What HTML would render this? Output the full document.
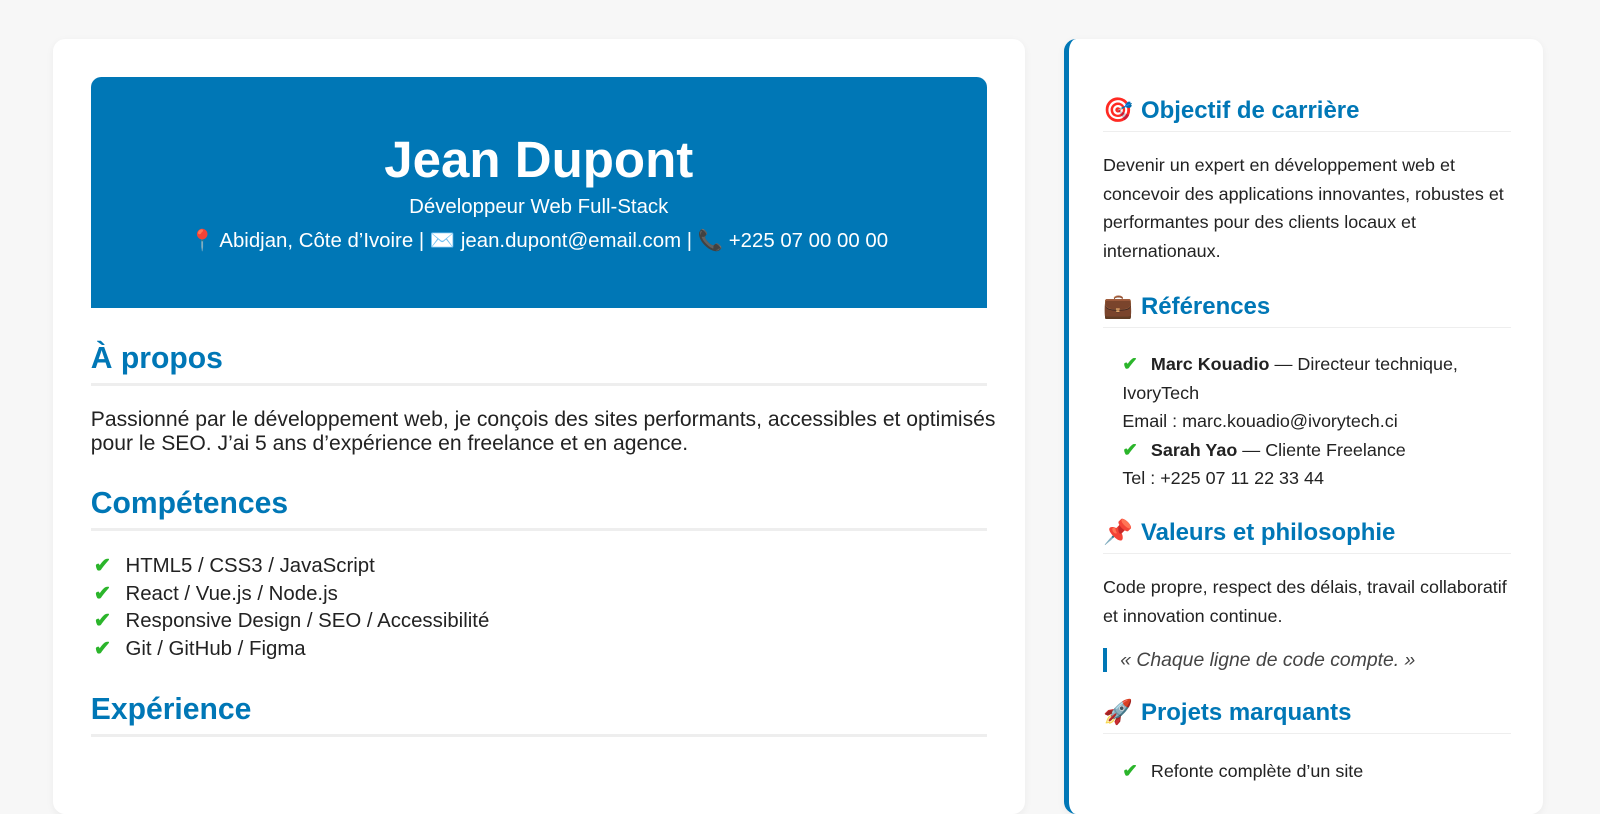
<!DOCTYPE html>
<html><head><meta charset="utf-8"><style>
*{box-sizing:border-box;margin:0;padding:0}
html{background:#f7f7f7}
body{background:#f7f7f7;font-family:"Liberation Sans",Arial,sans-serif;color:#333;width:1568px;height:749px;overflow:hidden;position:relative;zoom:1.0204}
.left{position:absolute;left:52px;top:38px;width:953px;height:760px;background:#fff;border-radius:12px;box-shadow:0 2px 8px rgba(0,0,0,.05)}
.hdr{position:absolute;left:37px;top:37px;width:878px;height:227px;background:#0077b6;border-radius:10px 10px 0 0;color:#fff;text-align:center}
.hdr h1{position:absolute;top:53px;width:100%;font-size:50px;font-weight:bold;line-height:56px}
.hdr .t{position:absolute;top:116px;width:100%;font-size:20px;line-height:24px}
.hdr .c{position:absolute;top:149px;width:100%;font-size:20px;line-height:24px}
.h2{position:absolute;left:37px;width:878px;font-size:29.5px;font-weight:bold;color:#0077b6;border-bottom:3px solid #eee;line-height:34px;padding-bottom:6px}
.p{position:absolute;left:37px;width:900px;font-size:20.7px;line-height:23px;color:#222}
.li{position:absolute;left:40px;font-size:20px;line-height:22px;color:#222}
.ck{color:#2bb52b;font-weight:bold;display:inline-block;width:31px;font-size:20px}
.rl .ck{width:28px;font-size:18px}
.right{position:absolute;left:1043px;top:38px;width:469px;height:760px;background:#fff;border-radius:12px;border-left:5px solid #0077b6;box-shadow:0 2px 8px rgba(0,0,0,.05)}
.h3{position:absolute;left:33px;width:400px;font-size:23.5px;font-weight:bold;color:#0077b6;border-bottom:1px solid #eee;line-height:28px;padding-bottom:5px}
.h3 span{margin-right:8px}
.rp{position:absolute;left:33px;width:415px;font-size:17.6px;line-height:28px;color:#222}
.rl{position:absolute;left:52px;width:370px;font-size:17.6px;line-height:28px;color:#222}
.q{position:absolute;left:33px;border-left:4px solid #0077b6;padding-left:13px;font-size:19px;font-style:italic;color:#444;line-height:24px}
</style></head><body>
<div class="left">
<div class="hdr">
<h1>Jean Dupont</h1>
<div class="t">Développeur Web Full-Stack</div>
<div class="c">📍 Abidjan, Côte d’Ivoire | ✉️ jean.dupont@email.com | 📞 +225 07 00 00 00</div>
</div>
<div class="h2" style="top:297px">À propos</div>
<div class="p" style="top:362px">Passionné par le développement web, je conçois des sites performants, accessibles et optimisés pour le SEO. J’ai 5 ans d’expérience en freelance et en agence.</div>
<div class="h2" style="top:439px">Compétences</div>
<div class="li" style="top:506px"><span class="ck">✔</span>HTML5 / CSS3 / JavaScript</div>
<div class="li" style="top:533px"><span class="ck">✔</span>React / Vue.js / Node.js</div>
<div class="li" style="top:560px"><span class="ck">✔</span>Responsive Design / SEO / Accessibilité</div>
<div class="li" style="top:587px"><span class="ck">✔</span>Git / GitHub / Figma</div>
<div class="h2" style="top:641px">Expérience</div>
</div>
<div class="right">
<div class="h3" style="top:57px"><span>🎯</span>Objectif de carrière</div>
<div class="rp" style="top:110px">Devenir un expert en développement web et concevoir des applications innovantes, robustes et performantes pour des clients locaux et internationaux.</div>
<div class="h3" style="top:249px"><span>💼</span>Références</div>
<div class="rl" style="top:305px"><span class="ck">✔</span><b>Marc Kouadio</b> — Directeur technique, IvoryTech<br>Email : marc.kouadio@ivorytech.ci<br><span class="ck">✔</span><b>Sarah Yao</b> — Cliente Freelance<br>Tel : +225 07 11 22 33 44</div>
<div class="h3" style="top:471px"><span>📌</span>Valeurs et philosophie</div>
<div class="rp" style="top:524px">Code propre, respect des délais, travail collaboratif et innovation continue.</div>
<div class="q" style="top:597px">« Chaque ligne de code compte. »</div>
<div class="h3" style="top:647px"><span>🚀</span>Projets marquants</div>
<div class="rl" style="top:704px"><span class="ck">✔</span>Refonte complète d’un site</div>
</div>
</body></html>
